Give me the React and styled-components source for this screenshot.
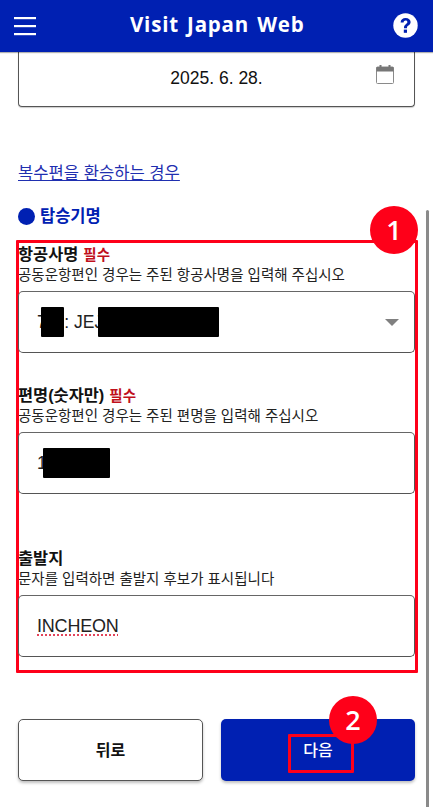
import React from "react";
import styled, { createGlobalStyle } from "styled-components";

const Global = createGlobalStyle`
  html, body { margin: 0; padding: 0; background: #fff; }
  body { font-family: "Liberation Sans", "Noto Sans CJK KR", sans-serif; color: #111; }
`;
const KR = `"Liberation Sans", "Noto Sans CJK KR", sans-serif`;

const Page = styled.div`
  position: relative; width: 433px; height: 807px; overflow: hidden; background: #fff;
  display: flex; flex-direction: column;
`;
const Header = styled.header`
  height: 52px; flex: none; background: #0020b2; display: flex; align-items: center;
  justify-content: space-between; padding: 0 15px 1px 14px; box-sizing: border-box;
  box-shadow: 0 1px 1px rgba(0,0,0,.3); position: relative; z-index: 2;
`;
const Title = styled.h1`
  margin: 0; font: 700 20.5px "Open Sans", sans-serif; color: #fff; letter-spacing: 0.8px; word-spacing: 2px;
  position: absolute; left: 130px; top: 9px; line-height: 30px;
`;
const Main = styled.main`
  padding: 0 18px; display: flex; flex-direction: column; flex: 1;
`;
const DateBox = styled.div`
  height: 55px; box-sizing: border-box; border: 1px solid #555; border-top: none;
  border-radius: 0 0 4px 4px; display: flex; align-items: center; justify-content: center;
  position: relative; font-size: 17.5px; color: #111; box-shadow: 0 1px 1px rgba(0,0,0,.2); padding-bottom: 2px;
`;
const CalIcon = styled.svg`
  position: absolute; right: 20px; top: 13px;
`;
const LinkText = styled.a`
  margin-top: 57px; font: 400 16.6px/20px ${KR}; color: #1f2fb0; text-decoration: underline; align-self: flex-start;
`;
const SectionHead = styled.div`
  margin-top: 22px; display: flex; align-items: center; gap: 5px; color: #0020b2;
  font: 700 16.5px/20px ${KR}; height: 20px;
`;
const Dot = styled.span`
  width: 17px; height: 17px; border-radius: 50%; background: #0020b2; flex: none;
`;
const RedFrame = styled.div`
  margin: 14px -3px 0 -2px; width: 402px; height: 433px; box-sizing: border-box;
  border: 3px solid #fe0019; display: flex; flex-direction: column;
  border-radius: 1px;
`;
const Field = styled.div`
  display: flex; flex-direction: column; margin: ${p => p.$mt}px 0 0 -1px;
`;
const Label = styled.div`
  font: 700 16.4px/22px ${KR}; height: 22px; color: #111; display: flex; gap: 5px; align-items: baseline;
`;
const Req = styled.span`
  font: 700 14.5px/22px ${KR}; color: #c0101c;
`;
const Hint = styled.div`
  font: 400 14.5px/20px ${KR}; height: 20px; color: #222; white-space: nowrap;
`;
const InputBox = styled.div`
  position: relative; width: 397px; height: 62px; box-sizing: border-box; margin-top: 6px;
  border: 1px solid #555; border-top-color: #666; border-radius: 5px;
  display: flex; align-items: center; padding-left: 18px;
  font: 400 17.5px ${KR}; color: #222; background: #fff;
`;
const Redact = styled.span`
  position: absolute; background: #000; border-radius: 1px;
  left: ${p => p.$x}px; top: 15px; width: ${p => p.$w}px; height: 30px;
`;
const Arrow = styled.span`
  position: absolute; right: 15px; top: 27px; width: 0; height: 0;
  border-left: 7px solid transparent; border-right: 7px solid transparent; border-top: 7px solid #808080;
`;
const Spell = styled.span`
  text-decoration: underline dotted #e0304a; text-underline-offset: 3px; letter-spacing: -0.2px; font-size: 18px;
`;
const Buttons = styled.div`
  margin-top: 46px; display: flex; gap: 18px;
`;
const BackBtn = styled.button`
  width: 185px; height: 62px; box-sizing: border-box; background: #fff; border: 1px solid #555; border-radius: 5px;
  font: 700 16px ${KR}; color: #111; box-shadow: 0 2px 3px rgba(0,0,0,.25); padding: 0 0 3px;
`;
const NextBtn = styled.button`
  width: 194px; height: 62px; box-sizing: border-box; background: #0020b2; border: none; border-radius: 5px;
  font: 500 16px ${KR}; color: #fff; box-shadow: 0 2px 3px rgba(0,0,0,.25); position: relative; padding: 0 0 3px;
`;
const NextFrame = styled.span`
  position: absolute; left: 67px; top: 15px; width: 66px; height: 39px; box-sizing: border-box;
  border: 3px solid #fe0019; border-radius: 1px;
`;
const Badge = styled.div`
  position: absolute; left: ${p => p.$x}px; top: ${p => p.$y}px; width: 48px; height: 48px; border-radius: 50%;
  background: #fe0019; color: #fff; font: 600 27px/48px "Open Sans", sans-serif; text-align: center; z-index: 3;
`;
const Scrollbar = styled.div`
  position: absolute; left: 426px; top: 210px; width: 3px; height: 597px; background: #8a8a8a; border-radius: 2px 2px 0 0;
`;

export default function App() {
  return (
    <Page>
      <Global />
      <Header>
        <svg width="23" height="20" viewBox="0 0 23 20" fill="#fff">
          <rect x="0" y="1" width="22" height="2.2" /><rect x="0" y="9" width="22" height="2.2" /><rect x="0" y="17" width="22" height="2.2" />
        </svg>
        <Title>Visit Japan Web</Title>
        <svg width="25" height="25" viewBox="0 0 25 25">
          <circle cx="12.5" cy="12.5" r="12.2" fill="#fff" />
          <path d="M7.6 9.4c.1-2.9 2.1-4.5 5-4.5 3 0 5 1.7 5 4.1 0 1.7-.9 2.7-2.2 3.6-1.1.8-1.4 1.2-1.4 2.2v.5h-3v-.8c0-1.6.6-2.4 1.8-3.3 1-.7 1.6-1.2 1.6-2.1 0-1-.7-1.6-1.8-1.6s-1.9.7-2 1.9z" fill="#0020b2" />
          <rect x="10.8" y="16.6" width="3.2" height="3.2" fill="#0020b2" />
        </svg>
      </Header>
      <Main>
        <DateBox>
          2025. 6. 28.
          <CalIcon width="18" height="19" viewBox="0 0 18 19" fill="none">
            <rect x="0.5" y="2" width="17" height="16.5" rx="1" fill="#fff" stroke="#8a8a8a" />
            <rect x="0.5" y="2" width="17" height="4.5" fill="#777" />
            <rect x="3.5" y="0" width="2" height="3" fill="#777" /><rect x="12.5" y="0" width="2" height="3" fill="#777" />
          </CalIcon>
        </DateBox>
        <LinkText href="#">복수편을 환승하는 경우</LinkText>
        <SectionHead><Dot />탑승기명</SectionHead>
        <RedFrame>
          <Field $mt={0}>
            <Label>항공사명 <Req>필수</Req></Label>
            <Hint>공동운항편인 경우는 주된 항공사명을 입력해 주십시오</Hint>
            <InputBox>
              7C : JEJU AIR
              <Redact $x={22} $w={23} />
              <Redact $x={79} $w={121} />
              <Arrow />
            </InputBox>
          </Field>
          <Field $mt={31}>
            <Label>편명(숫자만) <Req>필수</Req></Label>
            <Hint>공동운항편인 경우는 주된 편명을 입력해 주십시오</Hint>
            <InputBox>
              1
              <Redact $x={24} $w={67} />
            </InputBox>
          </Field>
          <Field $mt={53}>
            <Label>출발지</Label>
            <Hint>문자를 입력하면 출발지 후보가 표시됩니다</Hint>
            <InputBox>
              <Spell>INCHEON</Spell>
            </InputBox>
          </Field>
        </RedFrame>
        <Buttons>
          <BackBtn>뒤로</BackBtn>
          <NextBtn>다음<NextFrame /></NextBtn>
        </Buttons>
      </Main>
      <Scrollbar />
      <Badge $x={370} $y={206}>1</Badge>
      <Badge $x={329} $y={696}>2</Badge>
    </Page>
  );
}
